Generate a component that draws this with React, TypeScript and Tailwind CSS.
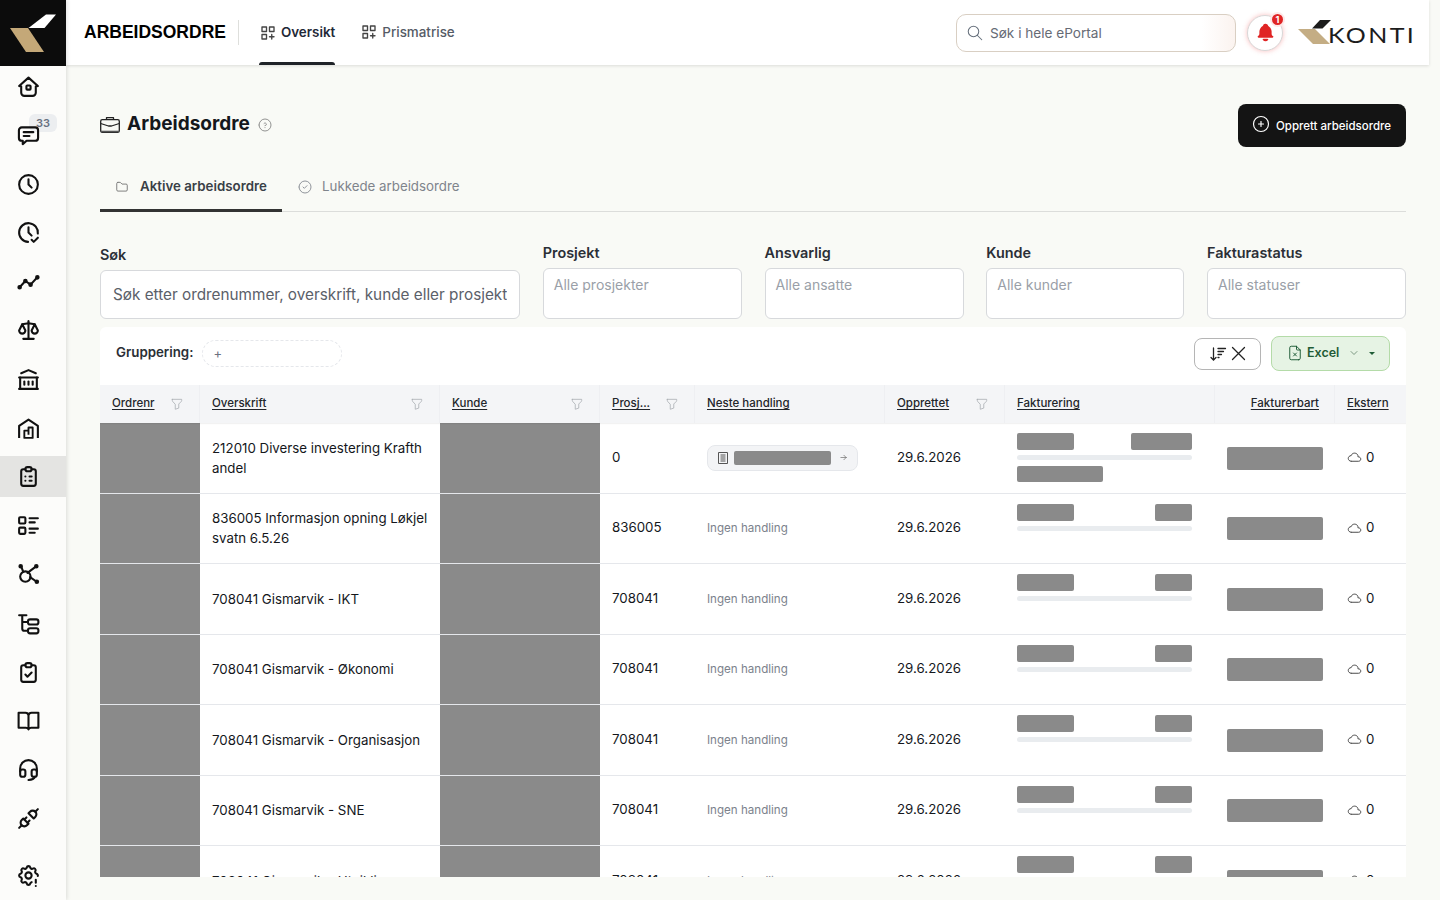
import type { ReactNode } from "react";
import {
  TbArrowRight,
  TbBellFilled,
  TbBuildingBank,
  TbCategoryPlus,
  TbChevronDown,
  TbCircleCheck,
  TbCirclePlus,
  TbClipboardCheck,
  TbClipboardList,
  TbClock,
  TbClockCheck,
  TbCloud,
  TbFileX,
  TbFilter,
  TbFolder,
  TbHeadset,
  TbHelpCircle,
  TbListDetails,
  TbPlugConnected,
  TbScale,
  TbSearch,
  TbSettingsExclamation,
} from "react-icons/tb";

const grid =
  "grid grid-cols-[100px_240px_160px_95px_190px_120px_210px_120px_71px]";

function HomeIcon() {
  return (
    <svg className="w-[25px] h-[25px]" viewBox="0 0 24 24" fill="none" stroke="currentColor" strokeWidth="2" strokeLinejoin="round">
      <path d="M3 11.5 12 3.5l9 8-2 .5v6a3 3 0 0 1-3 3H8a3 3 0 0 1-3-3v-6z" />
      <rect x="10" y="11" width="4" height="4" rx="0.8" />
    </svg>
  );
}

function ChatIcon() {
  return (
    <svg className="w-[23px] h-[23px]" viewBox="0 0 24 24" fill="none" stroke="currentColor" strokeWidth="2.200" strokeLinejoin="round" strokeLinecap="round">
      <path d="M5 3.500h14a3 3 0 0 1 3 3v8a3 3 0 0 1-3 3H10l-4 3.500v-3.500H5a3 3 0 0 1-3-3v-8a3 3 0 0 1 3-3z" />
      <path d="M7 8.500h10M7 12.500h6" />
    </svg>
  );
}

function TrendIcon() {
  return (
    <svg className="w-[25px] h-[25px]" viewBox="0 0 24 24" fill="currentColor" stroke="currentColor" strokeWidth="2" strokeLinejoin="round">
      <path d="M3.500 17.500 9 11.500l5 3.500 6.500-7" fill="none" />
      <circle cx="3.500" cy="17.500" r="1.200" />
      <circle cx="9" cy="11.500" r="1.200" />
      <circle cx="14" cy="15" r="1.200" />
      <circle cx="20.500" cy="8" r="1.200" />
    </svg>
  );
}

function HouseLockIcon() {
  return (
    <svg className="w-[25px] h-[25px]" viewBox="0 0 24 24" fill="none" stroke="currentColor" strokeWidth="2" strokeLinejoin="round">
      <path d="M3 21V9.500L12 3.500l9 6V21" />
      <path d="M8 21v-7h4v-3h4v10zM8 21h8M12 14v4" strokeWidth="1.800" />
    </svg>
  );
}

function NetworkIcon() {
  return (
    <svg className="w-[25px] h-[25px]" viewBox="0 0 24 24" fill="none" stroke="currentColor" strokeWidth="2" strokeLinecap="round">
      <circle cx="9" cy="14" r="5" />
      <path d="M5 4.500 7 9.500M19 4.500l-8 6M13.500 14.500l5 3.500" />
      <circle cx="4.500" cy="4" r="1.200" fill="currentColor" />
      <circle cx="19.500" cy="4" r="1.200" fill="currentColor" />
      <circle cx="20" cy="19" r="1.200" fill="currentColor" />
    </svg>
  );
}

function HierarchyIcon() {
  return (
    <svg className="w-[25px] h-[25px]" viewBox="0 0 24 24" fill="none" stroke="currentColor" strokeWidth="2" strokeLinecap="round">
      <path d="M3 4h7M6 4v13a2 2 0 0 0 2 2h3M6 10.500h5" />
      <rect x="11.500" y="8" width="10" height="5" rx="2" />
      <rect x="11.500" y="16.500" width="10" height="5" rx="2" />
    </svg>
  );
}

function BookIcon() {
  return (
    <svg className="w-[25px] h-[25px]" viewBox="0 0 24 24" fill="none" stroke="currentColor" strokeWidth="2" strokeLinejoin="round">
      <path d="M12 7v13.500M2.500 4.500H9a3 3 0 0 1 3 2.500 3 3 0 0 1 3-2.500h6.500V19H15a3 3 0 0 0-3 1.500A3 3 0 0 0 9 19H2.500z" />
    </svg>
  );
}

function CaseIcon() {
  return (
    <svg className="w-[20px] h-[18px]" viewBox="0 0 20 18" fill="none" stroke="#222" strokeWidth="1.300" strokeLinejoin="round">
      <rect x="0.700" y="3.700" width="18.600" height="12.600" rx="1.500" />
      <path d="M6.500 3.700V1.700h7v2M.7 7.500 8.500 10h3l7.800-2.500" />
      <path d="M.7 15.500h18.600" stroke="#555" strokeWidth="1.600" />
    </svg>
  );
}

function SortIcon() {
  return (
    <svg className="w-[18px] h-[18px]" viewBox="0 0 18 18" fill="none" stroke="currentColor" strokeWidth="1.300" strokeLinecap="round">
      <path d="M4.500 3v12M2 12.500 4.500 15 7 12.500M9 3.500h7.500M9 6.500h5.500M9 9.500h3.500M9 12.500h1" />
    </svg>
  );
}

function CloseIcon() {
  return (
    <svg className="w-[15px] h-[15px]" viewBox="0 0 15 15" fill="none" stroke="currentColor" strokeWidth="1.300" strokeLinecap="round">
      <path d="M1.500 1.500l12 12M13.500 1.500l-12 12" />
    </svg>
  );
}

function BrandMark() {
  return (
    <svg className="w-[66px] h-[66px]" viewBox="0 0 66 66">
      <path d="M28.500 28 46 14.500h10L44.500 28z" fill="#ffffff" />
      <path d="M10 28h18l16 24H26z" fill="#c4a878" />
    </svg>
  );
}

function KontiLogo() {
  return (
    <div className="flex items-center h-[30px] w-[115px]">
      <svg className="w-[33px] h-[27px] shrink-0" viewBox="0 0 33 27">
        <path d="M0 10h17l15 15H15z" fill="#c4ad84" />
        <path d="M14 9.500 22 1h11l-8.500 8.500z" fill="#1c1c1c" />
      </svg>
      <span className="-ml-[3px] mt-[4px] text-[21px] leading-none tracking-[2px] text-[#1c1c1c] font-['Lato',sans-serif] scale-x-[1.19] origin-left">
        KONTI
      </span>
    </div>
  );
}

const navItems: ReactNode[] = [
  <HomeIcon />,
  <ChatIcon />,
  <TbClock className="w-[25px] h-[25px]" />,
  <TbClockCheck className="w-[25px] h-[25px]" />,
  <TrendIcon />,
  <TbScale className="w-[25px] h-[25px]" />,
  <TbBuildingBank className="w-[25px] h-[25px]" />,
  <HouseLockIcon />,
  <TbClipboardList className="w-[25px] h-[25px]" />,
  <TbListDetails className="w-[25px] h-[25px]" />,
  <NetworkIcon />,
  <HierarchyIcon />,
  <TbClipboardCheck className="w-[25px] h-[25px]" />,
  <BookIcon />,
  <TbHeadset className="w-[25px] h-[25px]" />,
  <TbPlugConnected className="w-[25px] h-[25px]" />,
];

function Sidebar() {
  return (
    <aside className="w-[66px] shrink-0 flex flex-col bg-[#fcfcfa] shadow-[1px_0_4px_rgba(0,0,0,0.12)] z-20">
      <div className="h-[66px] bg-[#0c0c0c]">
        <BrandMark />
      </div>
      <nav className="flex flex-col gap-[7.8px] flex-1">
        {navItems.map((icon, i) => (
          <div
            key={i}
            className={`relative h-[41px] pr-[10px] flex items-center justify-center text-[#111] ${i === 8 ? "bg-[#e4e4e2]" : ""}`}
          >
            {i === 1 && (
              <span className="absolute left-[29px] top-[-1px] w-[28px] h-[18px] rounded-md bg-[#eceef0] text-[11px] font-semibold leading-[18px] text-center text-gray-500">
                33
              </span>
            )}
            <span className="relative">{icon}</span>
          </div>
        ))}
      </nav>
      <div className="h-[41px] mb-[4px] pr-[10px] flex items-center justify-center text-[#111]">
        <TbSettingsExclamation className="w-[25px] h-[25px]" />
      </div>
    </aside>
  );
}

function Header() {
  return (
    <header className="h-[65px] shrink-0 mr-[11px] pl-[18px] pr-[16px] bg-white shadow-[0_1px_3px_rgba(0,0,0,0.12)] flex items-center z-10">
      <div className="text-[17.500px] font-bold text-black font-['Liberation_Sans',sans-serif] pr-3 border-r border-[#dedfdc] h-[25px] leading-[25px]">
        ARBEIDSORDRE
      </div>
      <div className="ml-5 h-full relative flex items-center gap-[4px] text-[13.400px] font-semibold text-[#1f2937]">
        <TbCategoryPlus className="w-[18px] h-[18px] text-[#444]" strokeWidth={1.8} />
        Oversikt
        <span className="absolute left-0 right-0 bottom-0 h-[3px] rounded-t bg-[#1f2328]" />
      </div>
      <div className="ml-[25px] flex items-center gap-[4px] text-[13.400px] font-medium text-[#555b66]">
        <TbCategoryPlus className="w-[18px] h-[18px] text-[#444]" strokeWidth={1.8} />
        Prismatrise
      </div>
      <div className="ml-auto w-[280px] h-[38px] rounded-[10px] border border-[#d9cfc3] bg-[linear-gradient(to_right,#ffffff_88%,#fbf3ef)] flex items-center pl-[9px] gap-[4px] text-[13.600px] text-[#666b75]">
        <TbSearch className="w-[18px] h-[18px] text-[#66707c]" strokeWidth={1.400} />
        <span className="ml-[2px] mt-[1px]">Søk i hele ePortal</span>
      </div>
      <div className="ml-[11px] relative w-[36px] h-[36px] rounded-full bg-white border border-[#d8d8d8] shadow-[0_0_5px_rgba(239,68,68,0.35)] flex items-center justify-center">
        <TbBellFilled className="w-[21px] h-[21px] text-[#e02424]" />
        <span className="absolute -top-[4px] -right-[3px] w-[15px] h-[15px] rounded-full bg-[#e02424] border-2 border-[#fde8e8] text-[9px] font-bold leading-[11px] text-center text-white">
          1
        </span>
      </div>
      <div className="ml-[15px]">
        <KontiLogo />
      </div>
    </header>
  );
}

function FilterField({ label, placeholder }: { label: string; placeholder: string }) {
  return (
    <div className="flex flex-col">
      <label className="text-[14.400px] font-semibold text-[#2b2f36] leading-[17px] mb-[7px]">{label}</label>
      <div className="h-[51px] rounded-md border border-[#d7d9dc] bg-white px-[10px] pt-[7px] text-[14px] leading-[17px] text-[#9a9fa8]">
        {placeholder}
      </div>
    </div>
  );
}

function Block({ className }: { className: string }) {
  return <div className={`bg-[#8a8a8a] rounded-[2px] ${className}`} />;
}

const columns = [
  { label: "Ordrenr", filter: true },
  { label: "Overskrift", filter: true },
  { label: "Kunde", filter: true },
  { label: "Prosj...", filter: true },
  { label: "Neste handling" },
  { label: "Opprettet", filter: true },
  { label: "Fakturering" },
  { label: "Fakturerbart", right: true },
  { label: "Ekstern" },
];

const rows = [
  { title: "212010 Diverse investering Krafth andel", project: "0", first: true },
  { title: "836005 Informasjon opning Løkjel svatn 6.5.26", project: "836005" },
  { title: "708041 Gismarvik - IKT", project: "708041" },
  { title: "708041 Gismarvik - Økonomi", project: "708041" },
  { title: "708041 Gismarvik - Organisasjon", project: "708041" },
  { title: "708041 Gismarvik - SNE", project: "708041" },
  { title: "708041 Gismarvik - Utvikling", project: "708041" },
];

function WorkOrderTable() {
  return (
    <section className="mt-[8px] flex-1 min-h-0 overflow-hidden bg-white rounded-t-md">
      <div className="h-[58px] pl-[16px] pr-[16px] pb-[6px] flex items-center">
        <span className="text-[13.300px] font-semibold text-[#2b2f36]">Gruppering:</span>
        <div className="ml-[9px] w-[140px] h-[27px] rounded-full border border-dashed border-[#e5e7eb] pl-[10px] text-[13px] leading-[25px] text-[#6b7280]">
          +
        </div>
        <button className="ml-auto mt-[1px] w-[67px] h-[32px] rounded-lg border border-[#b5b5b5] bg-white flex items-center justify-center gap-[4px] text-[#222]">
          <SortIcon />
          <CloseIcon />
        </button>
        <button className="ml-[10px] w-[119px] h-[35px] rounded-lg border border-[#b4dba8] bg-[#e6f3e4] flex items-center pl-[14px] text-[12.500px] font-semibold text-[#1f5c36]">
          <TbFileX className="w-[18px] h-[18px] mr-[3px]" strokeWidth={1.300} />
          Excel
          <TbChevronDown className="ml-[9px] w-[12px] h-[12px] text-[#5a7a62]" strokeWidth={1.500} />
          <span className="ml-[9px] border-x-[3px] border-x-transparent border-t-[3px] border-t-[#1f5c36]" />
        </button>
      </div>

      <div className={`${grid} h-[38px] bg-[#f4f5f7] shadow-[0_1px_1px_rgba(0,0,0,0.05)] relative`}>
        {columns.map((col) => (
          <div
            key={col.label}
            className={`h-full px-[12px] flex items-center text-[11.500px] font-medium text-[#23262b] border-r border-[#eeeff2] last:border-r-0 ${col.right ? "justify-end pr-[15px]" : "justify-between"}`}
          >
            <span className="underline underline-offset-2">{col.label}</span>
            {col.filter && <TbFilter className="w-[14px] h-[14px] mr-[3px] text-[#a6aab0]" strokeWidth={1.300} />}
          </div>
        ))}
      </div>

      {rows.map((row) => (
        <div key={row.title} className={`${grid} h-[70.500px] border-b border-[#e5e7eb] text-[13.300px] text-[#14171c]`}>
          <div className="bg-[#8a8a8a]" />
          <div className="px-[12px] flex items-center leading-[20px]">{row.title}</div>
          <div className="bg-[#8a8a8a]" />
          <div className="px-[12px] flex items-center">{row.project}</div>
          <div className="px-[12px] flex items-center">
            {row.first ? (
              <div className="w-[151px] h-[26px] rounded-lg border border-[#e5e7eb] bg-[#f3f4f6] flex items-center pl-[9px]">
                <svg className="w-[12px] h-[12px] text-[#555]" viewBox="0 0 12 12" fill="none" stroke="currentColor">
                  <path d="M1.500.5h9v11h-9zM3.500 3h5M3.500 5h5M3.500 7h5M3.500 9h5" />
                </svg>
                <Block className="ml-[5px] w-[97px] h-[14px]" />
                <TbArrowRight className="ml-[8px] w-[9px] h-[9px] text-[#777]" />
              </div>
            ) : (
              <span className="mt-[1px] text-[11.600px] text-[#7c828c]">Ingen handling</span>
            )}
          </div>
          <div className="px-[12px] flex items-center">29.6.2026</div>
          <div className="pl-[12px] pr-[23px] pt-[10px]">
            <div className="flex justify-between">
              <Block className="w-[57px] h-[17px]" />
              <Block className={`${row.first ? "w-[61px]" : "w-[37px]"} h-[17px]`} />
            </div>
            <div className="mt-[5px] h-[5px] rounded-full bg-[#e9ecef]" />
            {row.first && <Block className="mt-[6px] w-[86px] h-[16px]" />}
          </div>
          <div className="px-[12px] flex items-center">
            <Block className="mt-[1px] w-[96px] h-[23px]" />
          </div>
          <div className="px-[12px] flex items-center gap-[4px]">
            <TbCloud className="w-[15px] h-[15px] text-[#333]" strokeWidth={1.400} />
            0
          </div>
        </div>
      ))}
    </section>
  );
}

export default function App() {
  return (
    <div className="flex h-screen overflow-hidden bg-[#f9faf6] font-['Inter',sans-serif]">
      <Sidebar />
      <div className="flex-1 min-w-0 flex flex-col">
        <Header />
        <main className="flex-1 min-h-0 flex flex-col px-[34px] pt-[39px] pb-[23px]">
          <div className="h-[43px] shrink-0 flex items-center justify-between">
            <div className="flex items-center -mt-[2px]">
              <CaseIcon />
              <h1 className="ml-[7px] text-[19px] font-bold text-[#14171c]">Arbeidsordre</h1>
              <TbHelpCircle className="ml-[7px] w-[16px] h-[16px] text-[#777]" strokeWidth={1.200} />
            </div>
            <button className="w-[168px] h-[43px] rounded-lg bg-[#141414] text-white text-[11.500px] font-medium flex items-center pl-[13px] gap-[5px]">
              <TbCirclePlus className="w-[20px] h-[20px] -mt-[3px]" strokeWidth={1.400} />
              <span className="mt-[3px]">Opprett arbeidsordre</span>
            </button>
          </div>

          <div className="mt-[18px] h-[47px] shrink-0 flex border-b border-[#dcdddb] text-[13.300px]">
            <div className="w-[182px] h-[47px] pl-[15px] flex items-center gap-[11px] font-semibold text-[#3a3f47] border-b-[3px] border-[#333]">
              <TbFolder className="w-[14px] h-[14px] text-[#666]" strokeWidth={1.400} />
              Aktive arbeidsordre
            </div>
            <div className="ml-[15px] h-[44px] flex items-center gap-[9px] text-[#7f848c]">
              <TbCircleCheck className="w-[16px] h-[16px]" strokeWidth={1.300} />
              Lukkede arbeidsordre
            </div>
          </div>

          <div className="mt-[32px] shrink-0 grid grid-cols-[420px_199px_199px_198px_199px] gap-x-[22.750px] items-end">
            <div className="flex flex-col">
              <label className="text-[14.400px] font-semibold text-[#2b2f36] leading-[17px] mb-[7px]">Søk</label>
              <input
                className="h-[49px] rounded-md border border-[#d7d9dc] bg-white px-[12px] text-[15.300px] text-[#555] placeholder:text-[#5b6069] outline-none"
                placeholder="Søk etter ordrenummer, overskrift, kunde eller prosjekt"
              />
            </div>
            <FilterField label="Prosjekt" placeholder="Alle prosjekter" />
            <FilterField label="Ansvarlig" placeholder="Alle ansatte" />
            <FilterField label="Kunde" placeholder="Alle kunder" />
            <FilterField label="Fakturastatus" placeholder="Alle statuser" />
          </div>

          <WorkOrderTable />
        </main>
      </div>
    </div>
  );
}
